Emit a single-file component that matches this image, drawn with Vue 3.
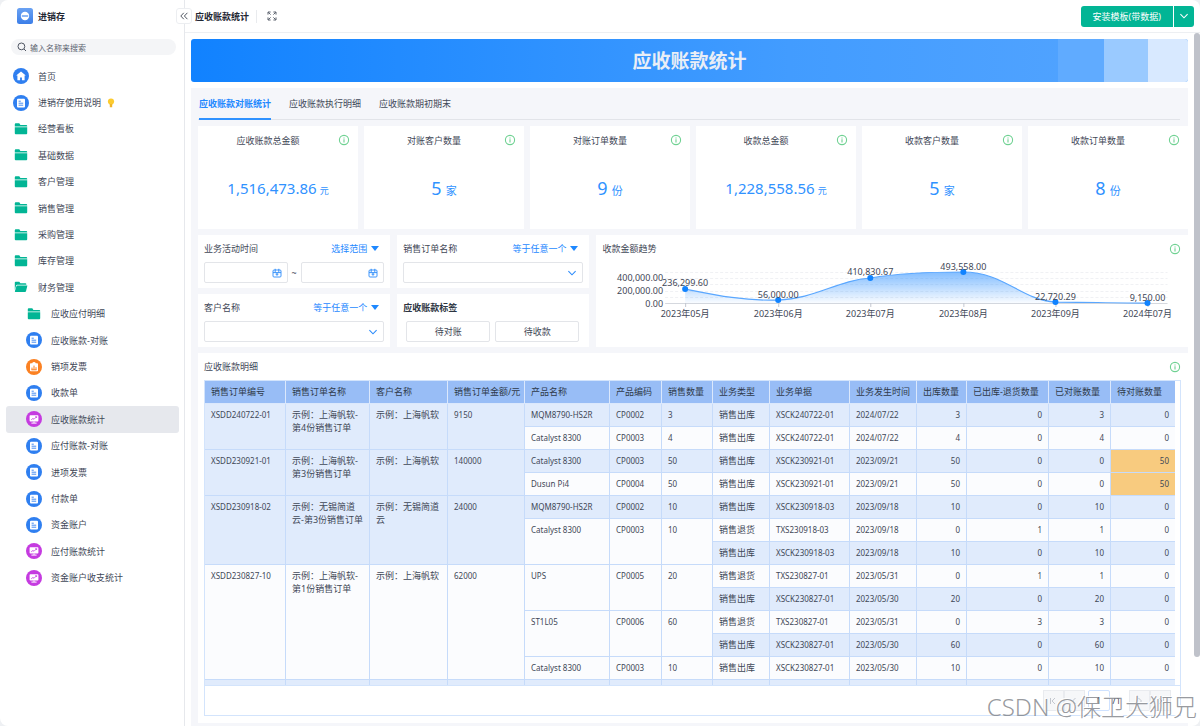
<script setup>
import { ref } from 'vue'

const activeMenu = ref('应收账款统计')
const menu = [
  { text: '首页', icon: 'home' },
  { text: '进销存使用说明', icon: 'doc', bulb: true },
  { text: '经营看板', icon: 'folder' },
  { text: '基础数据', icon: 'folder' },
  { text: '客户管理', icon: 'folder' },
  { text: '销售管理', icon: 'folder' },
  { text: '采购管理', icon: 'folder' },
  { text: '库存管理', icon: 'folder' },
  { text: '财务管理', icon: 'open' },
  { text: '应收应付明细', icon: 'folder', sub: true },
  { text: '应收账款-对账', icon: 'doc', sub: true },
  { text: '销项发票', icon: 'chart', sub: true },
  { text: '收款单', icon: 'doc', sub: true },
  { text: '应收账款统计', icon: 'board', sub: true },
  { text: '应付账款-对账', icon: 'doc', sub: true },
  { text: '进项发票', icon: 'doc', sub: true },
  { text: '付款单', icon: 'doc', sub: true },
  { text: '资金账户', icon: 'doc', sub: true },
  { text: '应付账款统计', icon: 'board', sub: true },
  { text: '资金账户收支统计', icon: 'board', sub: true }
]

const activeTab = ref('应收账款对账统计')
const tabs = ['应收账款对账统计', '应收账款执行明细', '应收账款期初期末']

const kpis = [
  { title: '应收账款总金额', value: '1,516,473.86', unit: '元', money: true },
  { title: '对账客户数量', value: '5', unit: '家' },
  { title: '对账订单数量', value: '9', unit: '份' },
  { title: '收款总金额', value: '1,228,558.56', unit: '元', money: true },
  { title: '收款客户数量', value: '5', unit: '家' },
  { title: '收款订单数量', value: '8', unit: '份' }
]

const points = [
  { x: 89, y: 27, ly: 24, v: '236,299.60', m: '2023年05月' },
  { x: 182, y: 38, ly: 36, v: '56,000.00', m: '2023年06月' },
  { x: 274, y: 16, ly: 13, v: '410,830.67', m: '2023年07月' },
  { x: 367, y: 10, ly: 8, v: '493,558.00', m: '2023年08月' },
  { x: 459, y: 40, ly: 38, v: '22,720.29', m: '2023年09月' },
  { x: 551, y: 41, ly: 39, v: '9,150.00', m: '2024年07月' }
]
const curve =
  'M89 27 C119 33 147 39 182 38 C218 37 242 18 274 16 C304 11 335 10 367 10 C407 10 425 38 459 40 C485 40 520 41 551 41'

const columns = [
  { t: '销售订单编号', w: 81 },
  { t: '销售订单名称', w: 84 },
  { t: '客户名称', w: 78 },
  { t: '销售订单金额/元', w: 77 },
  { t: '产品名称', w: 85 },
  { t: '产品编码', w: 52 },
  { t: '销售数量', w: 51 },
  { t: '业务类型', w: 57 },
  { t: '业务单据', w: 80 },
  { t: '业务发生时间', w: 67 },
  { t: '出库数量', w: 50 },
  { t: '已出库-退货数量', w: 82 },
  { t: '已对账数量', w: 62 },
  { t: '待对账数量', w: 64 }
]
const total = columns.reduce((s, c) => s + c.w, 0)

const OUT = '销售出库'
const BACK = '销售退货'
// o: order cells with row span, p: product cells with row span, d: document cells
const rows = [
  { o: [2, 'XSDD240722-01', '示例：上海帆软-\n第4份销售订单', '示例：上海帆软', '9150'], p: [1, 'MQM8790-HS2R', 'CP0002', '3'], d: [OUT, 'XSCK240722-01', '2024/07/22'], n: [3, 0, 3, 0] },
  { p: [1, 'Catalyst 8300', 'CP0003', '4'], d: [OUT, 'XSCK240722-01', '2024/07/22'], n: [4, 0, 4, 0] },
  { o: [2, 'XSDD230921-01', '示例：上海帆软-\n第3份销售订单', '示例：上海帆软', '140000'], p: [1, 'Catalyst 8300', 'CP0003', '50'], d: [OUT, 'XSCK230921-01', '2023/09/21'], n: [50, 0, 0, 50] },
  { p: [1, 'Dusun Pi4', 'CP0004', '50'], d: [OUT, 'XSCK230921-01', '2023/09/21'], n: [50, 0, 0, 50] },
  { o: [3, 'XSDD230918-02', '示例：无锡简道\n云-第3份销售订单', '示例：无锡简道\n云', '24000'], p: [1, 'MQM8790-HS2R', 'CP0002', '10'], d: [OUT, 'XSCK230918-03', '2023/09/18'], n: [10, 0, 10, 0] },
  { p: [2, 'Catalyst 8300', 'CP0003', '10'], d: [BACK, 'TXS230918-03', '2023/09/18'], n: [0, 1, 1, 0] },
  { d: [OUT, 'XSCK230918-03', '2023/09/18'], n: [10, 0, 10, 0] },
  { o: [5, 'XSDD230827-10', '示例：上海帆软-\n第1份销售订单', '示例：上海帆软', '62000'], p: [2, 'UPS', 'CP0005', '20'], d: [BACK, 'TXS230827-01', '2023/05/31'], n: [0, 1, 1, 0] },
  { d: [OUT, 'XSCK230827-01', '2023/05/30'], n: [20, 0, 20, 0] },
  { p: [2, 'ST1L05', 'CP0006', '60'], d: [BACK, 'TXS230827-01', '2023/05/31'], n: [0, 3, 3, 0] },
  { d: [OUT, 'XSCK230827-01', '2023/05/30'], n: [60, 0, 60, 0] },
  { p: [1, 'Catalyst 8300', 'CP0003', '10'], d: [OUT, 'XSCK230827-01', '2023/05/30'], n: [10, 0, 10, 0] },
  { o: [1, '', '', '', ''], p: [1, '', '', ''], d: ['', '', ''], n: ['', '', '', ''] }
]
</script>

<template>
  <div class="app">
    <svg class="defs" aria-hidden="true">
      <symbol id="i-home" viewBox="0 0 16 16">
        <circle cx="8" cy="8" r="8" fill="#2f7ff0" />
        <path d="M8 3.4 3.2 7.6h1.2v4.6h2.7V9.4h1.8v2.8h2.7V7.6h1.2z" fill="#fff" />
      </symbol>
      <symbol id="i-doc" viewBox="0 0 16 16">
        <circle cx="8" cy="8" r="8" fill="#2f7ff0" />
        <rect x="4" y="3.8" width="8" height="8.6" rx="1" fill="#fff" />
        <path d="M5.6 6.2h2.2M5.6 8.2h4.6M5.6 10.2h4.6" stroke="#2f7ff0" stroke-width="0.9" />
      </symbol>
      <symbol id="i-chart" viewBox="0 0 16 16">
        <circle cx="8" cy="8" r="8" fill="#fb8122" />
        <path d="M4.8 4.2h1.4a1.9 1.9 0 0 1 3.6 0h1.4q.8 0 .8.8v6.4q0 .8-.8.8H4.8q-.8 0-.8-.8V5q0-.8.8-.8z" fill="#fff" />
        <path d="M6 10.8V8.6M8 10.8V6.6M10 10.8V8.2M5.4 10.8h5.2" stroke="#fb8122" stroke-width="1" />
      </symbol>
      <symbol id="i-board" viewBox="0 0 16 16">
        <circle cx="8" cy="8" r="8" fill="#c53be0" />
        <rect x="3.6" y="4.2" width="8.8" height="6.4" rx="0.8" fill="#fff" />
        <path d="M8 10.5v1.4M5.4 12.1h5.2" stroke="#fff" stroke-width="1" />
        <path d="M5.2 8.8 7 7.4l1 .9 2.6-2.6M9.2 5.7h1.4V7" stroke="#c53be0" stroke-width="0.8" fill="none" />
      </symbol>
      <symbol id="i-folder" viewBox="0 0 16 16">
        <path d="M1.8 4V3.2q0-.9.9-.9h3.6L7.4 4h5.9q.9 0 .9.9v.5H1.8z" fill="#02b595" />
        <path d="M1.8 6.2h12.4v6.1q0 .9-.9.9H2.7q-.9 0-.9-.9z" fill="#02b595" />
      </symbol>
      <symbol id="i-open" viewBox="0 0 16 16">
        <path d="M1.8 11V3.6q0-.9.9-.9h3.6l1.1 1.5h5q.9 0 .9.9v.6H4.1q-.8 0-1 .8z" fill="#02b595" />
        <path d="M4.4 6.5h10L13 12.2q-.2.8-1 .8H2.4q-.7 0-.5-.7l1.5-5.1q.2-.7 1-.7z" fill="#02b595" />
      </symbol>
      <symbol id="i-info" viewBox="0 0 12 12">
        <circle cx="6" cy="6" r="4.6" fill="none" stroke="#6fd192" stroke-width="1.1" />
        <path d="M6 5.2v3.4M6 3.4v1" stroke="#6fd192" stroke-width="1.1" />
      </symbol>
      <symbol id="i-cal" viewBox="0 0 10 10">
        <rect x="1" y="2" width="8" height="7" rx="1" fill="none" stroke="#2b8bfb" stroke-width="0.9" />
        <path d="M1 4.6h8M3.2.8v3.6M6.8.8v3.6M5 4.8v3M3.6 6.2h2.8" fill="none" stroke="#2b8bfb" stroke-width="0.9" />
      </symbol>
      <symbol id="i-down" viewBox="0 0 10 10">
        <path d="M1.4 3.2 5 6.8l3.6-3.6" fill="none" stroke="currentColor" stroke-width="1.1" />
      </symbol>
    </svg>

    <aside class="side">
      <div class="brand">
        <svg class="logo" viewBox="0 0 16 16" aria-hidden="true">
          <defs>
            <linearGradient id="lg" x1="0" y1="0" x2="0" y2="1">
              <stop offset="0" stop-color="#6ba2f3" />
              <stop offset="1" stop-color="#3b7ee8" />
            </linearGradient>
          </defs>
          <rect width="16" height="16" rx="2.5" fill="url(#lg)" />
          <circle cx="8" cy="8" r="4.2" fill="#fff" />
          <rect x="4.8" y="7" width="6.4" height="2" rx="0.6" fill="#8fb8f5" />
        </svg>
        <strong>进销存</strong>
      </div>
      <label class="search">
        <svg viewBox="0 0 10 10" aria-hidden="true">
          <circle cx="4.4" cy="4.4" r="3.4" fill="none" stroke="#4f5663" stroke-width="1" />
          <path d="m7 7 2 2" stroke="#4f5663" stroke-width="1" />
        </svg>
        <input type="text" placeholder="输入名称来搜索" aria-label="输入名称来搜索" />
      </label>
      <nav class="menu">
        <a
          v-for="m in menu"
          :key="m.text"
          href="#"
          :class="{ sub: m.sub, on: m.text === activeMenu }"
          @click.prevent="activeMenu = m.text"
        >
          <svg class="mi" aria-hidden="true"><use :href="'#i-' + m.icon" /></svg>
          <span>{{ m.text }}</span>
          <svg v-if="m.bulb" class="bulb" viewBox="0 0 8 10" aria-hidden="true">
            <circle cx="4" cy="3.5" r="3.1" fill="#fccb2f" />
            <path d="M2.8 6h2.4v3.2H2.8z" fill="#f0b429" />
          </svg>
        </a>
      </nav>
    </aside>

    <main class="main">
      <header class="top">
        <button class="fold" type="button" aria-label="收起菜单">
          <svg viewBox="0 0 10 10" aria-hidden="true">
            <path d="M4.8 1.8 1.8 5l3 3.2M8.4 1.8l-3 3.2 3 3.2" fill="none" stroke="#3d4450" stroke-width="0.9" />
          </svg>
        </button>
        <h1>应收账款统计</h1>
        <button class="full" type="button" aria-label="全屏">
          <svg viewBox="0 0 10 10" aria-hidden="true">
            <path d="M1 3.6V1h2.6M6.4 1H9v2.6M9 6.4V9H6.4M3.6 9H1V6.4M1.4 1.4l2.2 2.2M8.6 1.4 6.4 3.6M8.6 8.6 6.4 6.4M1.4 8.6l2.2-2.2" fill="none" stroke="#4a515e" stroke-width="0.9" />
          </svg>
        </button>
        <div class="install">
          <button type="button">安装模板(带数据)</button>
          <button class="more" type="button" aria-label="更多">
            <svg aria-hidden="true"><use href="#i-down" /></svg>
          </button>
        </div>
      </header>

      <div class="body">
        <section class="banner">
          <div class="bands"><i class="b1"></i><i class="b2"></i><i class="b3"></i></div>
          <h2>应收账款统计</h2>
        </section>

        <section class="panel">
          <div class="tabs">
            <button
              v-for="t in tabs"
              :key="t"
              type="button"
              :class="{ on: t === activeTab }"
              @click="activeTab = t"
            >{{ t }}</button>
          </div>

          <div class="kpis">
            <article v-for="k in kpis" :key="k.title" class="kpi">
              <header>
                <span>{{ k.title }}</span>
                <svg class="info" aria-hidden="true"><use href="#i-info" /></svg>
              </header>
              <p :class="{ money: k.money }"><b>{{ k.value }}</b><small>{{ k.unit }}</small></p>
            </article>
          </div>

          <div class="filters">
            <div class="card">
              <div class="fh"><span>业务活动时间</span><button type="button">选择范围<i></i></button></div>
              <div class="range">
                <label class="box"><input type="text" aria-label="开始时间" /><svg aria-hidden="true"><use href="#i-cal" /></svg></label>
                <span>~</span>
                <label class="box"><input type="text" aria-label="结束时间" /><svg aria-hidden="true"><use href="#i-cal" /></svg></label>
              </div>
            </div>
            <div class="card">
              <div class="fh"><label for="order">销售订单名称</label><button type="button">等于任意一个<i></i></button></div>
              <div class="box"><select id="order"><option></option></select><svg aria-hidden="true"><use href="#i-down" /></svg></div>
            </div>
            <div class="card trend">
              <div class="fh">
                <span>收款金额趋势</span>
                <svg class="info" aria-hidden="true"><use href="#i-info" /></svg>
              </div>
              <svg class="plot" viewBox="0 0 591 60" role="img" aria-label="收款金额趋势">
                <defs>
                  <linearGradient id="ag" x1="0" y1="0" x2="0" y2="1">
                    <stop offset="0" stop-color="#1e88ff" stop-opacity="0.55" />
                    <stop offset="1" stop-color="#1e88ff" stop-opacity="0.02" />
                  </linearGradient>
                </defs>
                <path d="M69 10.5h502M69 16.5h502M69 22.5h502M69 29.5h502M69 35.5h502" stroke="#f0f1f4" stroke-dasharray="3 2" />
                <path d="M69 41.5h502" stroke="#d5d8de" />
                <path v-for="p in points" :key="p.m" :d="`M${p.x + 0.5} 41v4`" stroke="#c4c8d0" />
                <path :d="curve + ' V41.5 H89 Z'" fill="url(#ag)" />
                <path :d="curve" fill="none" stroke="#5aa7ff" stroke-width="1.2" />
                <circle v-for="p in points" :key="p.v" :cx="p.x" :cy="p.y" r="3" fill="#1183ff" />
                <g class="ytext">
                  <text x="67" y="19">400,000.00</text>
                  <text x="67" y="32">200,000.00</text>
                  <text x="67" y="45">0.00</text>
                </g>
                <g class="xtext">
                  <text v-for="p in points" :key="p.v" :x="p.x" :y="p.ly">{{ p.v }}</text>
                  <text v-for="p in points" :key="p.m" :x="p.x" y="55">{{ p.m }}</text>
                </g>
              </svg>
            </div>
            <div class="card">
              <div class="fh"><label for="client">客户名称</label><button type="button">等于任意一个<i></i></button></div>
              <div class="box"><select id="client"><option></option></select><svg aria-hidden="true"><use href="#i-down" /></svg></div>
            </div>
            <div class="card">
              <div class="fh"><strong>应收账款标签</strong></div>
              <div class="tags"><button type="button">待对账</button><button type="button">待收款</button></div>
            </div>
          </div>

          <div class="detail">
            <div class="fh">
              <span>应收账款明细</span>
              <svg class="info" aria-hidden="true"><use href="#i-info" /></svg>
            </div>
            <div class="frame">
              <div class="scroll">
                <table>
                  <colgroup>
                    <col v-for="c in columns" :key="c.t" :style="{ width: (c.w / total) * 100 + '%' }" />
                  </colgroup>
                  <thead>
                    <tr><th v-for="c in columns" :key="c.t" scope="col">{{ c.t }}</th></tr>
                  </thead>
                  <tbody>
                    <tr v-for="(r, i) in rows" :key="i">
                      <template v-if="r.o">
                        <td class="code" :rowspan="r.o[0]">{{ r.o[1] }}</td>
                        <td :rowspan="r.o[0]">{{ r.o[2] }}</td>
                        <td :rowspan="r.o[0]">{{ r.o[3] }}</td>
                        <td class="code" :rowspan="r.o[0]">{{ r.o[4] }}</td>
                      </template>
                      <template v-if="r.p">
                        <td class="code" :rowspan="r.p[0]">{{ r.p[1] }}</td>
                        <td class="code" :rowspan="r.p[0]">{{ r.p[2] }}</td>
                        <td class="code" :rowspan="r.p[0]">{{ r.p[3] }}</td>
                      </template>
                      <td>{{ r.d[0] }}</td>
                      <td class="code">{{ r.d[1] }}</td>
                      <td class="code">{{ r.d[2] }}</td>
                      <td v-for="(v, j) in r.n" :key="j" class="code num" :class="{ warn: j === 3 && v > 0 }">{{ v }}</td>
                    </tr>
                  </tbody>
                </table>
              </div>
              <footer class="pager">
                <div class="pair">
                  <button type="button" aria-label="首页">
                    <svg viewBox="0 0 10 10" aria-hidden="true"><path d="M2.5 2v6M7 2 4 5l3 3" /></svg>
                  </button>
                  <button type="button" aria-label="上一页">
                    <svg viewBox="0 0 10 10" aria-hidden="true"><path d="M6.5 2l-3 3 3 3" /></svg>
                  </button>
                </div>
                <input type="text" value="1" aria-label="页码" />
                <span>/1</span>
                <div class="pair next">
                  <button type="button" aria-label="下一页">
                    <svg viewBox="0 0 10 10" aria-hidden="true"><path d="M3.5 2l3 3-3 3" /></svg>
                  </button>
                  <button type="button" aria-label="末页">
                    <svg viewBox="0 0 10 10" aria-hidden="true"><path d="M7.5 2v6M3 2l3 3-3 3" /></svg>
                  </button>
                </div>
              </footer>
            </div>
          </div>
        </section>
        <div class="bar"></div>
      </div>
    </main>
    <div class="mark">CSDN @保卫大狮兄</div>
  </div>
</template>

<style>
html,
body {
  margin: 0;
  background: #eef0f3;
}
</style>

<style scoped>
* {
  box-sizing: border-box;
}
.app {
  position: relative;
  display: flex;
  height: 100vh;
  overflow: hidden;
  border-radius: 8px;
  background: #fff;
  color: #3f4857;
  font: 9px/13px "Noto Sans", "Noto Sans CJK SC", sans-serif;
}
button,
input,
select {
  margin: 0;
  padding: 0;
  border: 0;
  background: none;
  color: inherit;
  font: inherit;
  outline: none;
}
h1,
h2,
p {
  margin: 0;
}
svg {
  display: block;
  flex: none;
}
.defs {
  position: absolute;
  width: 0;
  height: 0;
}

/* sidebar */
.side {
  flex: none;
  width: 185px;
  padding-right: 5px;
  border-right: 1px solid #e6e8ec;
}
.brand {
  display: flex;
  align-items: center;
  gap: 5px;
  height: 32px;
  padding-left: 17px;
  color: #1f2733;
}
.logo {
  width: 16px;
  height: 16px;
}
.search {
  display: flex;
  align-items: center;
  gap: 3px;
  height: 16px;
  margin: 7px 3px 8px 11px;
  padding: 0 6px;
  border-radius: 8px;
  background: #f4f5f7;
}
.search svg {
  width: 10px;
  height: 10px;
}
.search input {
  flex: 1;
  min-width: 0;
  font-size: 8px;
}
.search input::placeholder {
  color: #5c6470;
}
.menu {
  display: grid;
  grid-auto-rows: 1fr;
  height: 528px;
  margin-left: 6px;
}
.menu a {
  display: flex;
  align-items: center;
  padding-left: 7px;
  border-radius: 3px;
  color: inherit;
  text-decoration: none;
}
.menu a.sub {
  padding-left: 20px;
}
.menu a.on {
  background: #e6e8ed;
}
.mi {
  width: 16px;
  height: 16px;
  margin-right: 9px;
}
.bulb {
  width: 8px;
  height: 10px;
  margin-left: 6px;
}

/* header */
.main {
  display: flex;
  flex: 1;
  flex-direction: column;
  min-width: 0;
}
.top {
  position: relative;
  display: flex;
  align-items: center;
  height: 33px;
  padding: 0 6px 0 10px;
  border-bottom: 1px solid #edeff2;
}
.fold {
  position: absolute;
  top: 8px;
  left: -9px;
  display: grid;
  place-items: center;
  width: 16px;
  height: 16px;
  border: 1px solid #eceef1;
  border-radius: 3px;
  background: #fff;
}
.fold svg {
  width: 10px;
  height: 10px;
}
.top h1 {
  padding-right: 7px;
  border-right: 1px solid #e9ebee;
  color: #1f2733;
  font-size: 9px;
  font-weight: 700;
}
.full {
  margin-left: 10px;
}
.full svg {
  width: 10px;
  height: 10px;
}
.install {
  display: flex;
  gap: 1px;
  height: 21px;
  margin-left: auto;
}
.install button {
  padding: 0 12px;
  border-radius: 3px 0 0 3px;
  background: #02b595;
  color: #fff;
}
.install .more {
  width: 20px;
  padding: 0 5px;
  border-radius: 0 3px 3px 0;
}
.more svg {
  width: 10px;
  height: 10px;
}

/* page body */
.body {
  position: relative;
  display: flex;
  flex: 1;
  flex-direction: column;
  gap: 6px;
  min-height: 0;
  padding: 6px 12px 0 6px;
}
.bar {
  position: absolute;
  top: 0;
  right: 0;
  width: 6px;
  height: 90%;
  border-radius: 3px;
  background: #bfc2ca;
}
.banner {
  display: grid;
  flex: none;
  height: 43px;
  overflow: hidden;
  border-radius: 3px;
  background: linear-gradient(90deg, #1182ff, #429cff 60%, #55a5ff);
}
.bands,
.banner h2 {
  grid-area: 1 / 1;
}
.banner h2 {
  place-self: center;
  color: #e9eef6;
  font-size: 19px;
  line-height: 26px;
}
.bands {
  display: flex;
  justify-content: flex-end;
}
.b1 {
  width: 46px;
  background: #60abff;
}
.b2 {
  width: 44px;
  background: #9acaff;
}
.b3 {
  width: 40px;
  background: #d8e9ff;
}
.panel {
  display: flex;
  flex: 1;
  flex-direction: column;
  gap: 6px;
  min-height: 0;
  padding: 0 0 3px 7px;
  background: #f5f6fa;
}
.tabs {
  display: flex;
  flex: none;
  gap: 18px;
  height: 32px;
  margin-right: 8px;
  padding-left: 1px;
  border-bottom: 1px solid #e2e4e9;
}
.tabs button {
  height: 32px;
  border-bottom: 2px solid transparent;
  cursor: pointer;
}
.tabs .on {
  border-color: #3092ff;
  color: #1e88ff;
  font-weight: 700;
}
.kpis {
  display: grid;
  grid-template-columns: repeat(6, 1fr);
  gap: 6px;
}
.kpi {
  height: 103px;
  background: #fff;
}
.kpi header {
  display: flex;
  align-items: center;
  height: 28px;
  padding-right: 8px;
}
.kpi header span {
  flex: 1;
  text-align: center;
}
.info {
  width: 12px;
  height: 12px;
}
.kpi p {
  display: flex;
  align-items: baseline;
  justify-content: center;
  gap: 4px;
  margin-top: 22px;
  color: #3092ff;
  line-height: 24px;
}
.kpi b {
  font-size: 18px;
  font-weight: 400;
}
.kpi .money {
  gap: 3px;
}
.kpi .money b {
  font-size: 15px;
}
.kpi small {
  font-size: 11px;
}
.kpi .money small {
  font-size: 9px;
}

/* filters and trend */
.filters {
  display: grid;
  grid-template-columns: 192fr 192fr 591fr;
  grid-template-rows: 53px 53px;
  gap: 6px 7px;
}
.card {
  min-width: 0;
  padding: 0 6px;
  background: #fff;
}
.trend {
  grid-row: span 2;
  padding: 0;
}
.fh {
  display: flex;
  align-items: center;
  justify-content: space-between;
  height: 27px;
}
.trend .fh {
  padding: 0 7px 0 6px;
}
.fh strong {
  color: #2c3441;
}
.fh button {
  display: flex;
  align-items: center;
  gap: 4px;
  margin-right: 5px;
  color: #1e88ff;
}
.fh i {
  border: 4px solid transparent;
  border-top: 5px solid #1e88ff;
  border-bottom: 0;
}
.box {
  display: flex;
  position: relative;
  flex: 1;
  align-items: center;
  min-width: 0;
  height: 21px;
  border: 1px solid #e3e5e9;
  border-radius: 2px;
  color: #2b8bfb;
}
.box input,
.box select {
  width: 100%;
  height: 100%;
  appearance: none;
}
.box svg {
  position: absolute;
  right: 5px;
  width: 10px;
  height: 10px;
  pointer-events: none;
}
.range {
  display: flex;
  align-items: center;
  gap: 4px;
}
.plot {
  width: 100%;
  overflow: visible;
}
.plot text {
  fill: #3f4857;
  font-size: 9px;
}
.ytext {
  text-anchor: end;
}
.xtext {
  text-anchor: middle;
}
.tags {
  display: flex;
  gap: 5px;
  padding: 0 4px 0 3px;
}
.tags button {
  flex: 1;
  height: 21px;
  border: 1px solid #e3e5e9;
  border-radius: 2px;
}

/* detail table */
.detail {
  display: flex;
  flex: 1;
  flex-direction: column;
  min-height: 0;
  padding: 0 7px 7px 6px;
  background: #fff;
}
.detail .fh {
  flex: none;
}
.frame {
  display: flex;
  flex: 1;
  flex-direction: column;
  min-height: 0;
  border: 1px solid #d3e4fc;
}
.scroll {
  flex: 1;
  min-height: 0;
  margin-right: 5px;
  overflow: hidden;
}
table {
  width: 100%;
  border-spacing: 0;
  table-layout: fixed;
}
tr {
  height: 23px;
}
th,
td {
  padding: 4px 0 5px 6px;
  border: solid #c6dbfa;
  border-width: 0 1px 1px 0;
  text-align: left;
  vertical-align: top;
  white-space: pre;
}
th {
  border-color: #dbe8fc;
  background: #98bdf6;
  color: #2f3a4a;
  font-weight: 400;
}
td {
  background: #fbfcfe;
}
tbody tr:nth-child(odd) td {
  background: #e0ebfc;
}
.code {
  font-size: 8px;
}
td.num {
  padding-right: 6px;
  padding-left: 0;
  text-align: right;
}
td:last-child,
th:last-child {
  border-right: 0;
}
tbody tr:nth-child(n) td.warn {
  background: #f8cb7f;
}
.pager {
  display: flex;
  flex: none;
  align-items: center;
  justify-content: flex-end;
  height: 30px;
  padding-right: 9px;
  border-top: 1px solid #d3e4fc;
}
.pair {
  display: flex;
}
.pair button {
  display: grid;
  place-items: center;
  width: 21px;
  height: 21px;
  border: 1px solid #e9ebef;
  background: #f6f7f9;
}
.pair svg {
  width: 10px;
  height: 10px;
  fill: none;
  stroke: #c3c7cf;
}
.pager input {
  width: 22px;
  height: 21px;
  margin: 0 3px;
  border: 1px solid #cfe2ff;
  border-radius: 2px;
  text-align: center;
}
.next {
  margin-left: 8px;
}
.mark {
  position: absolute;
  right: 3px;
  bottom: 2px;
  color: rgba(125, 128, 134, 0.8);
  font-size: 24px;
  font-weight: 300;
  line-height: 34px;
  text-shadow: -1px -1px 0 #fff;
  pointer-events: none;
}
</style>
